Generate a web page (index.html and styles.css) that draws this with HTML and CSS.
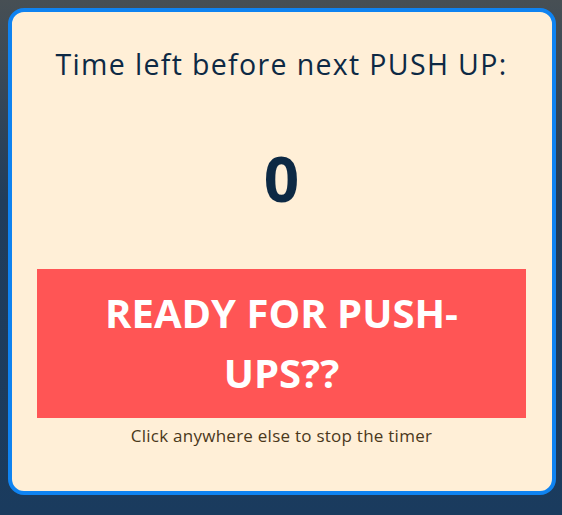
FILE: index.html
```html
<!DOCTYPE html>
<html lang="en">
<head>
<meta charset="utf-8">
<title>Push up timer</title>
<link rel="stylesheet" href="styles.css">
</head>
<body>
  <main class="card">
    <h1 class="title">Time left before next PUSH UP:</h1>
    <div class="count">0</div>
    <button class="ready" type="button">READY FOR PUSH-UPS??</button>
    <p class="hint">Click anywhere else to stop the timer</p>
  </main>
</body>
</html>
```
FILE: styles.css
```css
html, body {
  height: 100%;
}
body {
  margin: 0;
  padding: 8px 6px 0 8px;
  box-sizing: border-box;
  background: linear-gradient(180deg, #474f54 0px, #3c4a56 60px, #213d5b 200px, #1a3b5e 100%);
  font-family: "Open Sans", "Noto Sans", sans-serif;
}
.card {
  width: 548px;
  height: 487px;
  box-sizing: border-box;
  border: 4px solid #0f83f1;
  border-radius: 16px;
  background: #ffefd7;
  padding: 33px 26px 0 25px;
  display: flex;
  flex-direction: column;
  align-items: stretch;
}
.title {
  margin: 0;
  font-size: 28.5px;
  line-height: 38px;
  font-weight: 400;
  letter-spacing: 1.35px;
  color: #0d2944;
  text-align: center;
}
.count {
  margin-top: 64px;
  font-size: 62px;
  line-height: 62px;
  font-weight: 700;
  color: #0d2944;
  text-align: center;
}
.ready {
  margin-top: 60px;
  border: 0;
  background: #ff5555;
  color: #ffffff;
  font-family: inherit;
  font-size: 40px;
  line-height: 60px;
  font-weight: 700;
  padding: 14px 40px 15px;
  text-align: center;
}
.hint {
  margin: 7px 0 0;
  font-size: 17px;
  line-height: 22px;
  letter-spacing: 0.25px;
  color: #4a381b;
  text-align: center;
}
```
